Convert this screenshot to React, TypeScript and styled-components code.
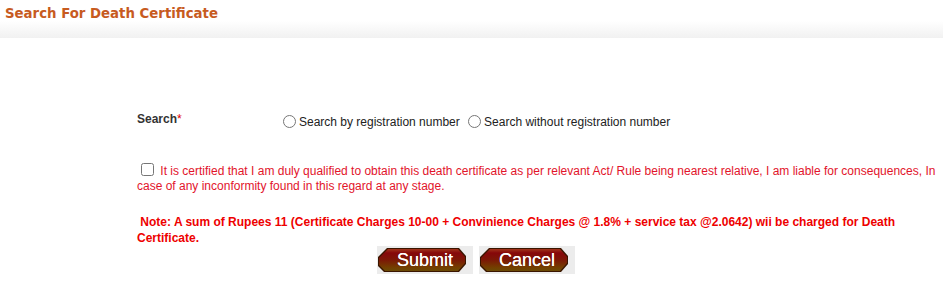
import React from 'react';
import styled, { createGlobalStyle } from 'styled-components';

const GlobalStyle = createGlobalStyle`
  html, body {
    margin: 0;
    padding: 0;
    background: #fff;
  }
  body {
    font-family: "Liberation Sans", Arial, sans-serif;
    font-size: 12px;
  }
`;

const Page = styled.div`
  width: 943px;
  height: 291px;
  overflow: hidden;
  background: #fff;
`;

const HeaderBar = styled.div`
  height: 38px;
  padding-left: 5px;
  box-sizing: border-box;
  background: linear-gradient(to bottom, #ffffff 0%, #ffffff 55%, #f1f1f1 100%);
`;

const Title = styled.h1`
  margin: 0;
  padding-top: 4px;
  font-family: "DejaVu Sans Condensed", "DejaVu Sans", sans-serif;
  font-size: 14.8px;
  font-weight: bold;
  color: #c75b1f;
  line-height: 17px;
`;

const FormBody = styled.div`
  padding-left: 137px;
  width: 805px;
`;

const SearchRow = styled.div`
  display: flex;
  align-items: flex-start;
  margin-top: 71px;
  height: 22px;
`;

const Label = styled.div`
  width: 141px;
  flex-shrink: 0;
  font-weight: bold;
  color: #333;
  line-height: 16px;
  padding-top: 2px;
`;

const Required = styled.span`
  color: #e00000;
  font-weight: normal;
`;

const RadioGroup = styled.div`
  color: #222;
  line-height: 20px;
  padding-top: 3px;
  white-space: nowrap;

  input {
    vertical-align: -2px;
  }
`;

const Certify = styled.div`
  margin-top: 32px;
  color: #e2142b;
  line-height: 15px;

  input {
    margin: 0 3px 0 4px;
    vertical-align: -1px;
  }
`;

const Note = styled.div`
  margin-top: 20px;
  color: #ee0000;
  font-weight: bold;
  line-height: 16px;
`;

const ButtonRow = styled.div`
  display: flex;
  justify-content: center;
  gap: 6px;
  padding-left: 9px;
`;

const ButtonFrame = styled.div`
  width: 96px;
  height: 28px;
  background: #ececec;
  padding: 2px 7px 2px 1px;
  box-sizing: border-box;
`;

const shape = `polygon(9px 0, calc(100% - 7px) 0, 100% 8px, 100% calc(100% - 8px), calc(100% - 7px) 100%, 6px 100%, 0 calc(100% - 6px), 0 9px)`;

const ButtonEdge = styled.div`
  height: 100%;
  padding: 1px;
  box-sizing: border-box;
  background: #3a1500;
  clip-path: ${shape};
`;

const ButtonFace = styled.button`
  width: 100%;
  height: 100%;
  border: 0;
  margin: 0;
  padding: 0 0 1px 6px;
  clip-path: ${shape};
  background: linear-gradient(to bottom, #a0341a 0%, #86070a 18%, #7c1806 50%, #734000 85%, #6a4a05 100%);
  color: #fff;
  font-family: "Liberation Sans", Arial, sans-serif;
  font-size: 18px;
  line-height: 22px;
  text-shadow: 0 0 0.4px #fff;
  cursor: pointer;
`;

const App: React.FC = () => {
  return (
    <Page>
      <GlobalStyle />
      <HeaderBar>
        <Title>Search For Death Certificate</Title>
      </HeaderBar>
      <FormBody>
        <SearchRow>
          <Label>
            Search<Required>*</Required>
          </Label>
          <RadioGroup>
            <input type="radio" name="mode" />Search by registration number{' '}
            <input type="radio" name="mode" />Search without registration number
          </RadioGroup>
        </SearchRow>
        <Certify>
          <input type="checkbox" /> It is certified that I am duly qualified to obtain this death
          certificate as per relevant Act/ Rule being nearest relative, I am liable for
          consequences, In case of any inconformity found in this regard at any stage.
        </Certify>
        <Note>
          &nbsp;Note: A sum of Rupees 11 (Certificate Charges 10-00 + Convinience Charges @ 1.8% +
          service tax @2.0642) wii be charged for Death Certificate.
        </Note>
      </FormBody>
      <ButtonRow>
        <ButtonFrame>
          <ButtonEdge>
            <ButtonFace type="button">Submit</ButtonFace>
          </ButtonEdge>
        </ButtonFrame>
        <ButtonFrame>
          <ButtonEdge>
            <ButtonFace type="button">Cancel</ButtonFace>
          </ButtonEdge>
        </ButtonFrame>
      </ButtonRow>
    </Page>
  );
};

export default App;
